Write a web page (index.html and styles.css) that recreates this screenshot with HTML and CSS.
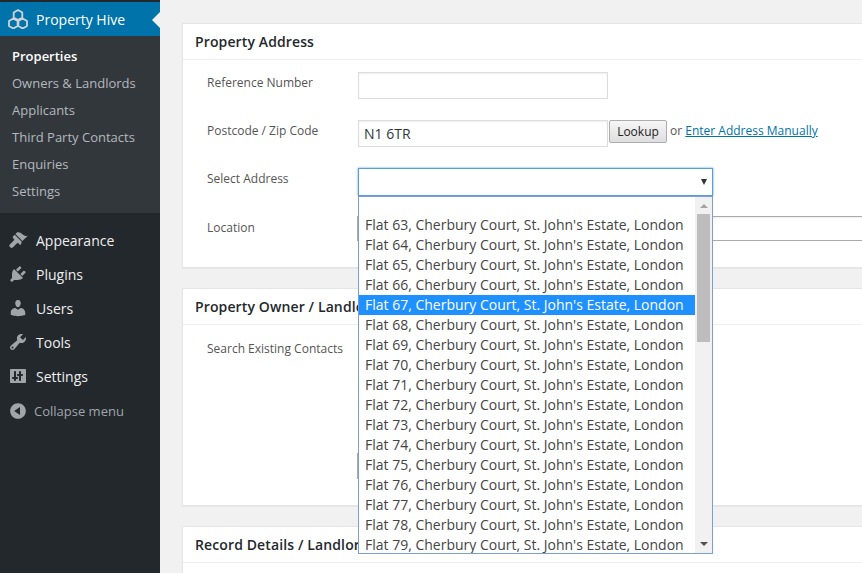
FILE: index.html
```html
<!DOCTYPE html>
<html lang="en">
<head>
<meta charset="utf-8">
<title>Property</title>
<link rel="stylesheet" href="styles.css">
</head>
<body>
<div class="page">
  <nav class="sidebar">
    <div class="current">
      <svg class="hive" viewBox="0 0 20 20"><g fill="none" stroke="#cfd3d6" stroke-width="1.8" stroke-linejoin="round"><path d="M10 1l4.300 2.500v5L10 11 5.700 8.500v-5z"/><path d="M5.300 9.500l4.300 2.500v5l-4.300 2.500L1 17v-5z"/><path d="M14.700 9.500L19 12v5l-4.300 2.500-4.300-2.500v-5z"/></g></svg>
      <span>Property Hive</span>
      <i class="notch"></i>
    </div>
    <ul class="submenu">
      <li class="active">Properties</li>
      <li>Owners &amp; Landlords</li>
      <li>Applicants</li>
      <li>Third Party Contacts</li>
      <li>Enquiries</li>
      <li>Settings</li>
    </ul>
    <ul class="menu">
      <li><svg viewBox="0 0 20 20"><path d="M14.480 11.060L7.410 3.990l1.500-1.500c.5-.56 2.300-.47 3.510.32 1.210.8 1.430 1.280 2.910 2.100 1.180.64 2.450 1.260 4.450.85zM13.770 11.770L6.700 4.700 4.930 6.470c-.39.39-.39 1.020 0 1.410l1.060 1.060c.39.39.39 1.020 0 1.410l-4.200 4.200c-.6.6-.6 1.600 0 2.200l.8.8c.6.6 1.600.6 2.200 0l4.200-4.200c.39-.39 1.020-.39 1.410 0l1.060 1.060c.39.39 1.020.39 1.410 0z"/></svg>Appearance</li>
      <li><svg viewBox="0 0 20 20"><path d="M13.110 4.360L9.870 7.600 8 5.730l3.240-3.240c.35-.34 1.050-.2 1.560.32.520.51.660 1.210.310 1.550zm-8 1.770l.91-1.120 9.010 9.010-1.190.84c-.71.71-2.630 1.160-3.820 1.160H6.140L4.900 17.260c-.59.59-1.540.59-2.120 0-.59-.58-.59-1.530 0-2.120l1.240-1.240v-3.880c0-1.130.4-3.190 1.090-3.890zm7.260 3.970l3.240-3.240c.34-.35 1.040-.2 1.550.31.520.52.660 1.220.32 1.570l-3.240 3.240z"/></svg>Plugins</li>
      <li><svg viewBox="0 0 20 20"><path d="M10 9.250c-2.270 0-2.730-3.440-2.730-3.440C7 4.020 7.820 2 9.970 2c2.160 0 2.980 2.020 2.710 3.810 0 0-.41 3.440-2.680 3.440zm0 2.570L12.720 10c2.390 0 4.520 2.330 4.520 4.530v2.490s-3.650 1.130-7.240 1.130c-3.650 0-7.240-1.130-7.240-1.130v-2.490c0-2.250 1.940-4.480 4.470-4.480z"/></svg>Users</li>
      <li><svg viewBox="0 0 20 20"><path d="M16.680 9.770c-1.340 1.340-3.300 1.670-4.950.99l-5.410 6.520c-.99.99-2.590.99-3.580 0s-.99-2.590 0-3.570l6.520-5.420c-.68-1.650-.35-3.610.99-4.950 1.280-1.280 3.120-1.620 4.720-1.060l-2.890 2.890 2.820 2.820 2.860-2.870c.53 1.580.18 3.390-1.080 4.650zM3.810 16.210c.4.39 1.040.39 1.430 0 .4-.4.4-1.040 0-1.430-.39-.4-1.030-.4-1.430 0-.39.39-.39 1.030 0 1.430z"/></svg>Tools</li>
      <li><svg viewBox="0 0 20 20"><path d="M18 16V4c0-.55-.45-1-1-1H3c-.55 0-1 .45-1 1v12c0 .55.45 1 1 1h13.990c.55 0 1.010-.45 1.010-1zM8 11h1c.55 0 1 .45 1 1s-.45 1-1 1H8v1c0 .55-.45 1-1 1s-1-.45-1-1v-1H5c-.55 0-1-.45-1-1s.45-1 1-1h1V6c0-.55.45-1 1-1s1 .45 1 1v5zm7-2c0 .55-.45 1-1 1h-1v4c0 .55-.45 1-1 1s-1-.45-1-1v-4h-1c-.55 0-1-.45-1-1s.45-1 1-1h1V6c0-.55.45-1 1-1s1 .45 1 1v2h1c.55 0 1 .45 1 1z"/></svg>Settings</li>
    </ul>
    <div class="collapse">
      <svg viewBox="0 0 20 20"><path d="M10 2.160c4.330 0 7.840 3.510 7.840 7.840s-3.510 7.840-7.840 7.840S2.160 14.330 2.160 10 5.710 2.160 10 2.160zm2 11.720V6.120L6.180 9.970z"/></svg>
      <span>Collapse menu</span>
    </div>
  </nav>

  <main class="content">
    <section class="card card-address">
      <h2>Property Address</h2>
      <div class="body">
        <div class="row">
          <label>Reference Number</label>
          <span class="input"></span>
        </div>
        <div class="row">
          <label>Postcode / Zip Code</label>
          <span class="input">N1 6TR</span>
          <button class="lookup" type="button">Lookup</button>
          <span class="or">or <a href="#">Enter Address Manually</a></span>
        </div>
        <div class="row">
          <label>Select Address</label>
          <span class="select"><i class="caret"></i></span>
        </div>
        <div class="row">
          <label class="low">Location</label>
          <span class="location"></span>
        </div>
      </div>
    </section>

    <section class="card card-owner">
      <h2>Property Owner / Landlord</h2>
      <div class="body">
        <div class="row">
          <label class="low">Search Existing Contacts</label>
        </div>
        <span class="search-box"></span>
      </div>
    </section>

    <section class="card card-record">
      <h2>Record Details / Landlord</h2>
    </section>

    <div class="dropdown">
      <ul>
        <li>Flat 63, Cherbury Court, St. John's Estate, London</li>
        <li>Flat 64, Cherbury Court, St. John's Estate, London</li>
        <li>Flat 65, Cherbury Court, St. John's Estate, London</li>
        <li>Flat 66, Cherbury Court, St. John's Estate, London</li>
        <li class="hl">Flat 67, Cherbury Court, St. John's Estate, London</li>
        <li>Flat 68, Cherbury Court, St. John's Estate, London</li>
        <li>Flat 69, Cherbury Court, St. John's Estate, London</li>
        <li>Flat 70, Cherbury Court, St. John's Estate, London</li>
        <li>Flat 71, Cherbury Court, St. John's Estate, London</li>
        <li>Flat 72, Cherbury Court, St. John's Estate, London</li>
        <li>Flat 73, Cherbury Court, St. John's Estate, London</li>
        <li>Flat 74, Cherbury Court, St. John's Estate, London</li>
        <li>Flat 75, Cherbury Court, St. John's Estate, London</li>
        <li>Flat 76, Cherbury Court, St. John's Estate, London</li>
        <li>Flat 77, Cherbury Court, St. John's Estate, London</li>
        <li>Flat 78, Cherbury Court, St. John's Estate, London</li>
        <li>Flat 79, Cherbury Court, St. John's Estate, London</li>
      </ul>
      <div class="scrollbar">
        <i class="up"></i>
        <i class="thumb"></i>
        <i class="down"></i>
      </div>
    </div>
  </main>
</div>
</body>
</html>
```
FILE: styles.css
```css
* { box-sizing: border-box; }
html, body { margin: 0; height: 100%; overflow: hidden; }
body { background: #f1f1f1; font-family: "Open Sans", sans-serif; color: #444; }
.page { display: flex; width: 862px; height: 573px; overflow: hidden; }

.sidebar { flex: 0 0 160px; background: #23282d; padding-top: 2px; display: flex; flex-direction: column; }
.current { position: relative; flex: 0 0 34px; background: #0073aa; color: #fff; font-size: 14px; display: flex; align-items: center; padding-left: 8px; gap: 8px; }
.hive { width: 20px; height: 20px; }
.notch { position: absolute; right: 0; top: 10px; border: 8px solid transparent; border-right: 8px solid #f1f1f1; border-left: 0; }
.submenu { list-style: none; margin: 0; padding: 7px 0 8px; background: #32373c; }
.submenu li { height: 27px; line-height: 27px; font-size: 13px; padding-left: 12px; color: #b4b9be; }
.submenu li.active { color: #fff; font-weight: 600; }
.menu { list-style: none; margin: 0; padding: 10px 0 0; }
.menu li { height: 34px; display: flex; align-items: center; gap: 8px; padding-left: 8px; color: #eee; font-size: 14px; }
.menu svg { width: 20px; height: 20px; flex: none; fill: #a0a5aa; }
.collapse { display: flex; align-items: center; gap: 6px; margin-top: 1px; padding-left: 8px; height: 34px; font-size: 13px; color: #a0a5aa; }
.collapse svg { width: 20px; height: 20px; fill: #a0a5aa; }

.content { position: relative; flex: 1; min-width: 0; padding: 23px 0 0 22px; }
.card { width: 900px; background: #fff; border: 1px solid #e5e5e5; box-shadow: 0 1px 1px rgba(0,0,0,.04); margin-bottom: 20px; }
.card h2 { margin: 0; height: 36px; line-height: 35px; padding-left: 12px; font-size: 14px; font-weight: 550; letter-spacing: .12px; color: #23282d; border-bottom: 1px solid #eee; }
.card-address { height: 245px; }
.card-owner { height: 218px; }
.card-record { height: 100px; }
.body { position: relative; padding: 12px 0 0 24px; }
.row { display: flex; align-items: flex-start; height: 48px; }
.row label { flex: 0 0 151px; font-size: 12px; line-height: 18px; padding-top: 2px; color: #555; }
.row label.low { padding-top: 3px; }
.input { width: 250px; height: 27px; border: 1px solid #ddd; background: #fff; box-shadow: inset 0 1px 2px rgba(0,0,0,.07); font-size: 14px; line-height: 25px; padding-left: 5px; color: #32373c; }
.lookup { width: 58px; height: 23px; margin-left: 1px; padding: 0; border: 1px solid #adadad; border-radius: 2px; background: linear-gradient(#f6f6f6, #dedede); font: 12px/21px "Open Sans", sans-serif; color: #222; }
.or { margin-left: 3px; font-size: 12px; line-height: 22px; color: #555; }
.or a { color: #0073aa; }
.select { position: relative; width: 355px; height: 28px; border: 1px solid #5b9dd9; box-shadow: 0 0 2px rgba(30,140,190,.8); background: #fff; }
.caret { position: absolute; right: 5px; top: 10px; border: 3.500px solid transparent; border-bottom: 0; border-top: 6px solid #333; }
.location { width: 520px; height: 25px; margin-left: -1px; border: 1px solid #aaa; box-shadow: inset 0 1px 2px rgba(0,0,0,.07); }
.search-box { position: absolute; left: 174px; top: 128px; width: 300px; height: 26px; border: 1px solid #aaa; }

.dropdown { position: absolute; left: 198px; top: 196px; width: 355px; height: 358px; background: #fff; border: 1px solid #7a9fd8; display: flex; }
.dropdown ul { list-style: none; margin: 0; padding: 18px 0 0; flex: 1; overflow: hidden; }
.dropdown li { height: 20px; line-height: 20px; font-size: 14px; padding-left: 6px; white-space: nowrap; color: #444; }
.dropdown li.hl { background: #1e90ff; color: #fff; }
.scrollbar { position: relative; flex: 0 0 17px; background: #f1f1f1; }
.thumb { position: absolute; left: 2px; top: 17px; width: 13px; height: 128px; background: #bdbdbd; }
.up, .down { position: absolute; left: 5px; border: 4px solid transparent; }
.up { top: 7px; border-top: 0; border-bottom: 4px solid #a3a3a3; }
.down { bottom: 7px; border-bottom: 0; border-top: 4px solid #505050; }
```
